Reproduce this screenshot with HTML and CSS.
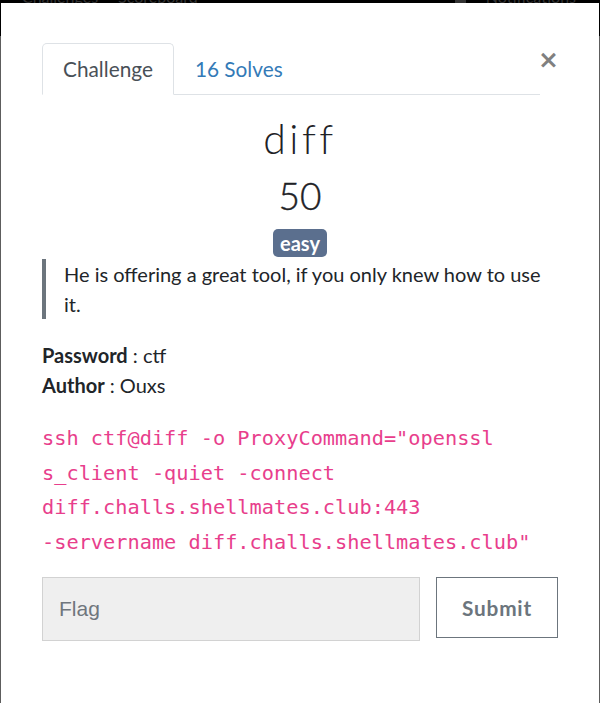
FILE: index.html
```html
<!DOCTYPE html>
<html lang="en">
<head>
<meta charset="utf-8">
<title>diff</title>
<link rel="stylesheet" href="styles.css">
</head>
<body>
<div class="topbar">
  <div class="topbar-left"><span>Challenges</span><span>Scoreboard</span></div>
  <div class="topbar-right"><span class="sq"></span><span>Notifications</span></div>
</div>
<div class="modal">
  <button class="close" type="button" aria-label="Close">&times;</button>
  <div class="modal-body">
    <ul class="nav-tabs">
      <li class="tab active">Challenge</li>
      <li class="tab"><a href="#">16 Solves</a></li>
    </ul>
    <h2 class="name">diff</h2>
    <h3 class="value">50</h3>
    <div class="tags"><span class="badge">easy</span></div>
    <blockquote class="desc">He is offering a great tool, if you only knew how to use it.</blockquote>
    <p class="meta"><strong>Password</strong> : ctf<br><strong>Author</strong> : Ouxs</p>
    <p class="cmd"><code>ssh ctf@diff -&#8288;o ProxyCommand="openssl s_client -&#8288;quiet -&#8288;connect diff.challs.shellmates.club:443 -&#8288;servername diff.challs.shellmates.club"</code></p>
    <div class="submit-row">
      <input class="flag" type="text" placeholder="Flag">
      <button class="submit" type="button">Submit</button>
    </div>
  </div>
</div>
</body>
</html>
```
FILE: styles.css
```css
html, body {
  margin: 0;
  padding: 0;
  height: 100%;
}
body {
  background: #5d5d5d;
  font-family: Lato, "Noto Sans", sans-serif;
  color: #212529;
  overflow: hidden;
}
.topbar {
  height: 36px;
  background: #000;
  display: flex;
  justify-content: space-between;
  align-items: flex-start;
}
.topbar-left, .topbar-right {
  height: 5px;
  display: flex;
  align-items: flex-end;
  gap: 20px;
  color: #333;
  font-size: 16px;
  line-height: 16px;
  white-space: nowrap;
}
.topbar-left { padding-left: 22px; }
.topbar-right { padding-right: 24px; }
.sq { width: 11px; height: 11px; background: #333; }

.modal {
  position: absolute;
  top: 3px;
  left: 1px;
  right: 1px;
  bottom: 0;
  background: #fff;
}
.close {
  position: absolute;
  top: 43px;
  right: 40px;
  border: 0;
  background: none;
  padding: 0;
  font-family: "DejaVu Sans", sans-serif;
  font-size: 25px;
  font-weight: bold;
  line-height: 28px;
  color: #808080;
  cursor: pointer;
}
.modal-body {
  padding: 40px 41px 0 41px;
}
.nav-tabs {
  list-style: none;
  margin: 0 18px 0 0;
  padding: 0;
  display: flex;
  border-bottom: 1px solid #dee2e6;
}
.tab {
  padding: 9px 20px 10px;
  font-size: 20.8px;
  line-height: 31px;
  border: 1px solid transparent;
  border-top-left-radius: 5px;
  border-top-right-radius: 5px;
  margin-bottom: -1px;
  color: #337ab7;
}
.tab a { color: #337ab7; text-decoration: none; }
.tab.active {
  color: #495057;
  background: #fff;
  border-color: #dee2e6 #dee2e6 #fff;
}
.name {
  margin: 20px 0 0;
  text-align: center;
  font-size: 41px;
  font-weight: 300;
  letter-spacing: 3.5px;
  line-height: 48px;
  color: #1e2226;
}
.value {
  margin: 11px 0 0;
  text-align: center;
  font-size: 37px;
  font-weight: 300;
  line-height: 44px;
  color: #1e2226;
  -webkit-text-stroke: 0.4px #1e2226;
}
.tags {
  text-align: center;
  margin-top: 11px;
  line-height: 0;
}
.badge {
  display: inline-block;
  background: #5b6f8e;
  color: #fff;
  font-weight: 700;
  font-size: 20px;
  line-height: 20px;
  padding: 4px 7px;
  border-radius: 5px;
}
.desc {
  margin: 2px 0 21px;
  border-left: 4px solid #6c757d;
  padding-left: 18px;
  font-size: 20px;
  line-height: 30px;
}
.meta {
  margin: 0;
  font-size: 20px;
  line-height: 30px;
}
.meta strong { font-weight: 700; }
.cmd {
  margin: 22px 0 0;
  font-family: "Liberation Mono", monospace;
  font-size: 20.3px;
  line-height: 33.6px;
  color: #e83e8c;
}
.submit-row {
  display: flex;
  align-items: flex-start;
  gap: 16px;
  margin-top: 17px;
}
.flag {
  flex: 1;
  height: 64px;
  box-sizing: border-box;
  margin: 0;
  background: #efefef;
  border: 1px solid #d2d2d2;
  padding: 0 16px;
  font-family: "Liberation Sans", Arial, sans-serif;
  font-size: 21px;
  color: #495057;
  outline: none;
}
.flag::placeholder { color: #6f767d; }
.submit {
  width: 122px;
  height: 61px;
  box-sizing: border-box;
  margin: 0;
  background: #fff;
  border: 1px solid #6c757d;
  color: #6c757d;
  font-family: Lato, sans-serif;
  font-weight: 700;
  font-size: 20.8px;
  letter-spacing: 0.8px;
}
```
